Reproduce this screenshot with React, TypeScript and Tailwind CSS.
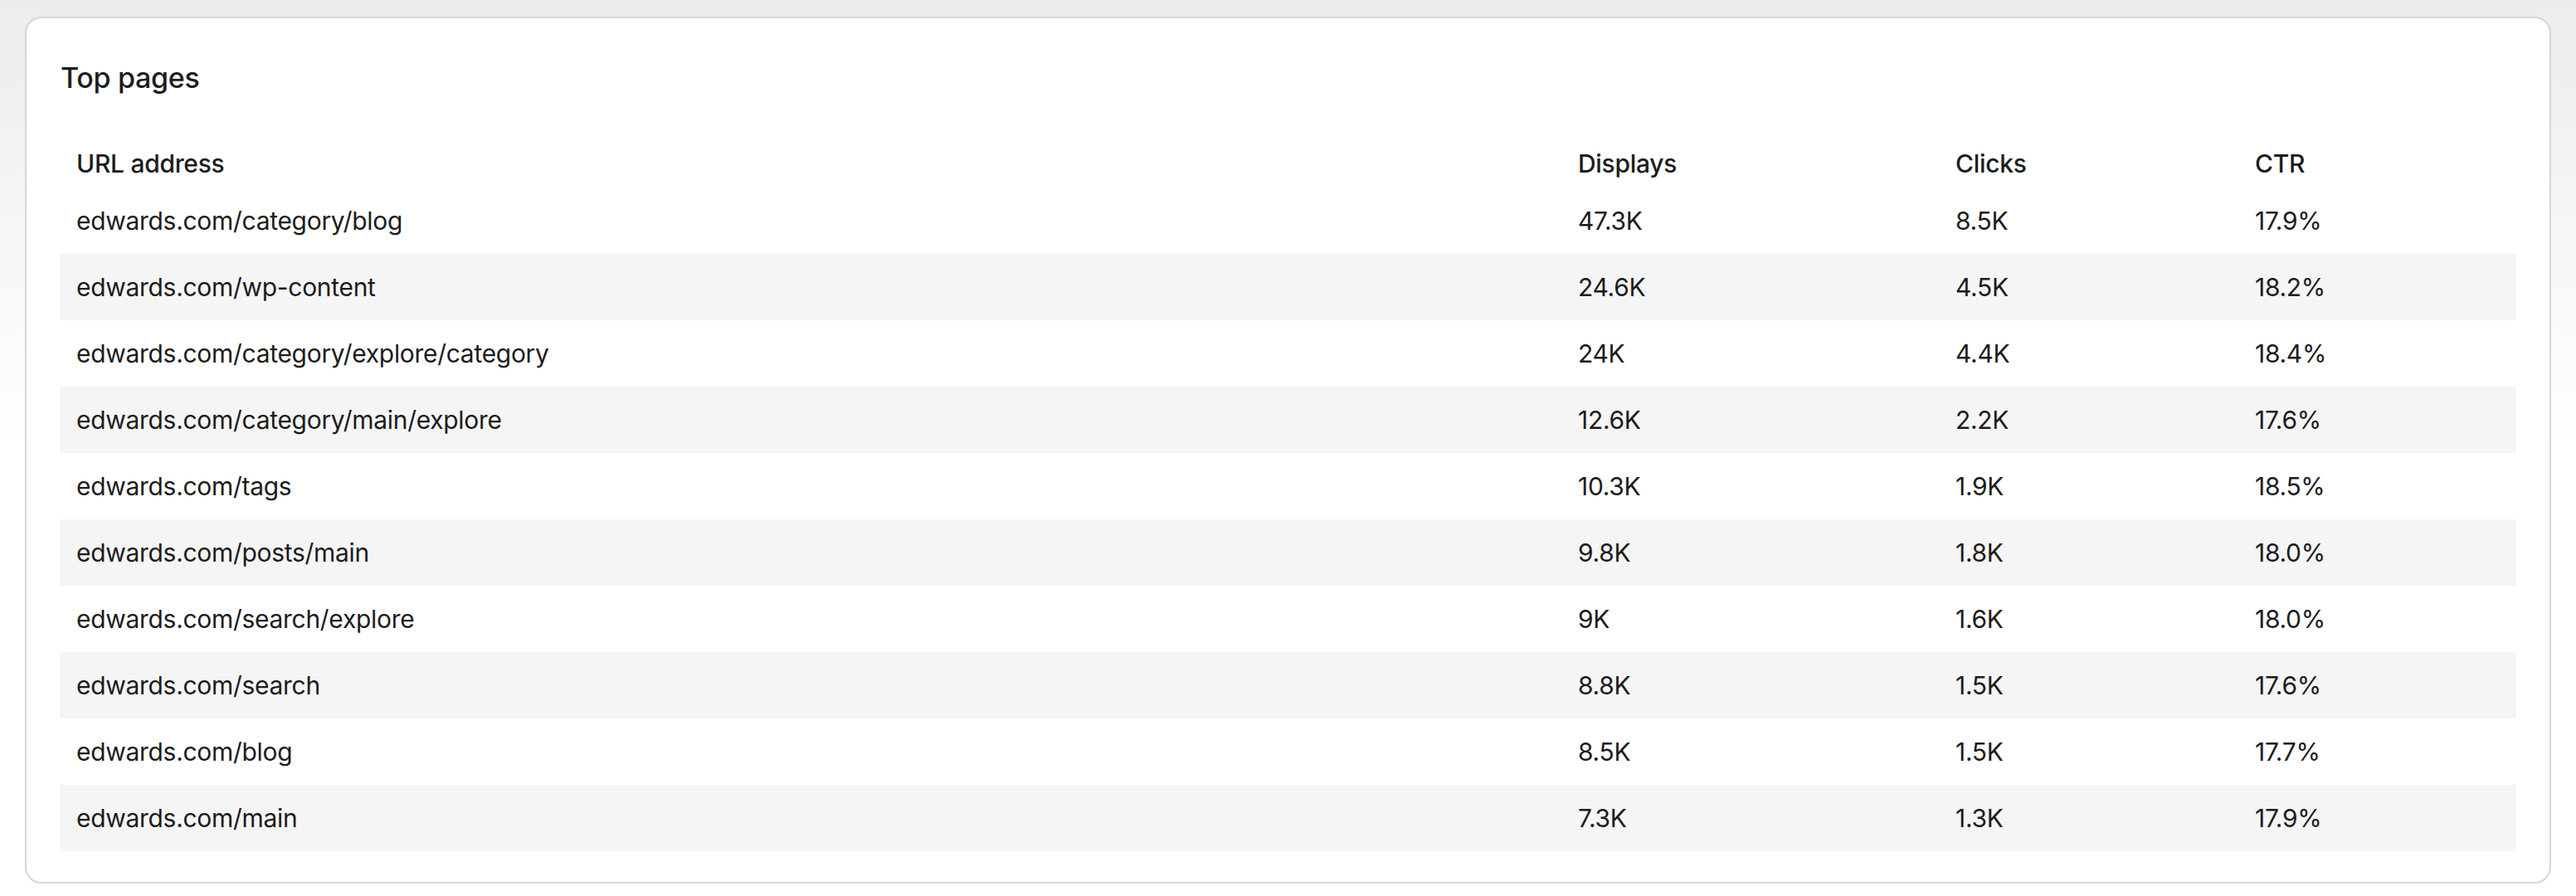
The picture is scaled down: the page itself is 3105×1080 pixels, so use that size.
const rows = [
  ["edwards.com/category/blog", "47.3K", "8.5K", "17.9%"],
  ["edwards.com/wp-content", "24.6K", "4.5K", "18.2%"],
  ["edwards.com/category/explore/category", "24K", "4.4K", "18.4%"],
  ["edwards.com/category/main/explore", "12.6K", "2.2K", "17.6%"],
  ["edwards.com/tags", "10.3K", "1.9K", "18.5%"],
  ["edwards.com/posts/main", "9.8K", "1.8K", "18.0%"],
  ["edwards.com/search/explore", "9K", "1.6K", "18.0%"],
  ["edwards.com/search", "8.8K", "1.5K", "17.6%"],
  ["edwards.com/blog", "8.5K", "1.5K", "17.7%"],
  ["edwards.com/main", "7.3K", "1.3K", "17.9%"],
];

function Row({ cells, cls }: { cells: string[]; cls: string }) {
  return (
    <div className={`grid grid-cols-[1810px_455px_361px_1fr] px-[20px] items-center ${cls}`}>
      {cells.map((c, i) => (
        <div key={i}>{c}</div>
      ))}
    </div>
  );
}

export default function App() {
  return (
    <div
      className="w-[3105px] h-[1080px] bg-gradient-to-b from-[#ececec] via-white to-white pt-[20px] px-[30px] text-[#1c1c1c]"
      style={{ fontFamily: "Inter, 'Open Sans', sans-serif" }}
    >
      <div className="h-[1045px] bg-white border-2 border-[#d6d6d6] rounded-[20px] px-[40px] pt-[50px]">
        <div className="text-[34px] font-medium leading-[44px] ml-[1px] tracking-[-0.3px]">Top pages</div>
        <div className="mt-[52px] text-[30px] tracking-[-0.3px]">
          <Row cells={["URL address", "Displays", "Clicks", "CTR"]} cls="h-[58px] font-medium" />
          {rows.map((r, i) => (
            <Row key={i} cells={r} cls={`h-[80px] ${i % 2 === 1 ? "bg-[#f5f5f5]" : ""}`} />
          ))}
        </div>
      </div>
    </div>
  );
}
